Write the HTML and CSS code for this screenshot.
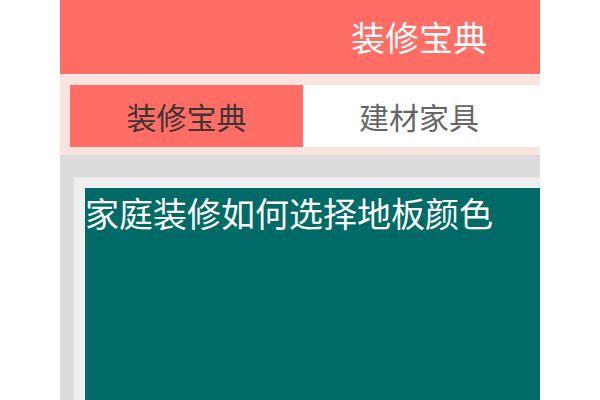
FILE: index.html
```html
<!DOCTYPE html>
<html lang="zh-CN">
<head>
<meta charset="utf-8">
<link rel="stylesheet" href="styles.css">
</head>
<body>
<div class="page">
  <header class="topbar">
    <h1 class="title">装修宝典</h1>
  </header>
  <nav class="tabs">
    <div class="tab active">装修宝典</div>
    <div class="tab">建材家具</div>
  </nav>
  <main class="content">
    <div class="card">
      <div class="article">
        <p class="article-title">家庭装修如何选择地板颜色</p>
      </div>
    </div>
  </main>
</div>
</body>
</html>
```

FILE: styles.css
```css
html, body {
  margin: 0;
  padding: 0;
  background: #ffffff;
  height: 100%;
  overflow: hidden;
}
body {
  font-family: "Noto Sans CJK SC", "Noto Sans", sans-serif;
}
.page {
  width: 480px;
  margin-left: 60px;
  height: 400px;
  display: flex;
  flex-direction: column;
  background: #dcdcdc;
}
.topbar {
  height: 74px;
  background: #ff6d65;
  display: flex;
  align-items: center;
  justify-content: flex-end;
  padding-right: 53px;
  border-bottom: 1px solid #fff4f2;
}
.title {
  margin: 0;
  font-size: 34px;
  font-weight: normal;
  color: #ffffff;
  line-height: 1;
}
.tabs {
  display: flex;
  background: #fde3df;
  padding: 10px 0 8px 10px;
}
.tab {
  height: 62px;
  display: flex;
  align-items: center;
  justify-content: center;
  font-size: 30px;
  color: #666666;
  background: #ffffff;
  flex: 1;
  padding-right: 5px;
}
.tab.active {
  flex: 0 0 233px;
  padding-right: 0;
  background: #ff6d65;
  color: #3d3533;
}
.content {
  flex: 1;
  padding: 22px 0 0 13px;
}
.card {
  height: 100%;
  background: #f0f0f0;
  border-top: 1px solid #e4e4e4;
  border-left: 2px solid #e6e6e6;
  padding: 10px 0 0 10px;
}
.article {
  height: 100%;
  background: #006a67;
}
.article-title {
  margin: 0;
  font-size: 34px;
  line-height: 1.45;
  color: #ffffff;
  white-space: nowrap;
}
```
